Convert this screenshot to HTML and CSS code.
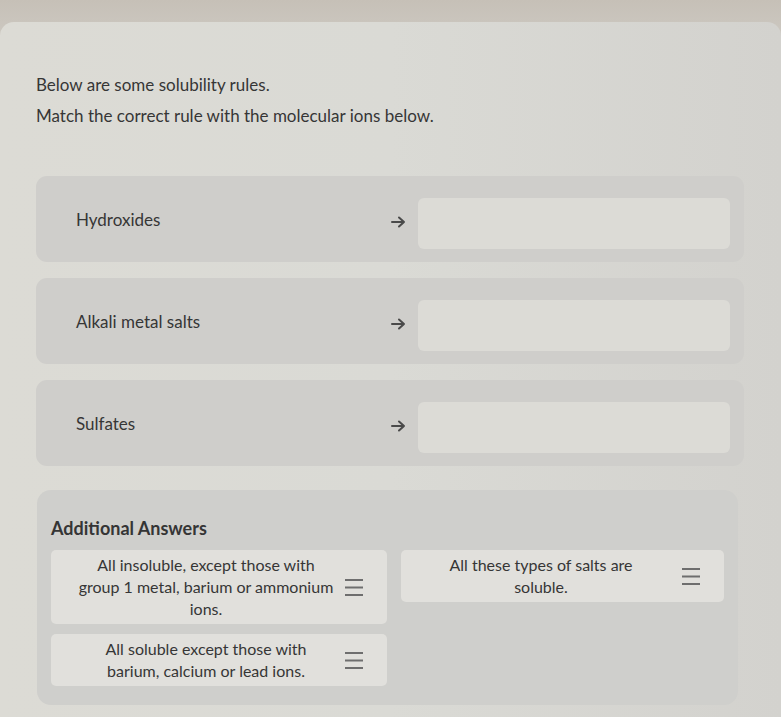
FILE: index.html
```html
<!DOCTYPE html>
<html lang="en">
<head>
    <meta charset="UTF-8">
    <meta name="viewport" content="width=device-width, initial-scale=1.0">
    <title>Solubility rules</title>
    <link rel="stylesheet" href="styles.css">
</head>
<body>
    <div class="sheet">
        <div class="question">
            <p>Below are some solubility rules.</p>
            <p>Match the correct rule with the molecular ions below.</p>
        </div>

        <div class="rows">
            <div class="match-row">
                <div class="term">Hydroxides</div>
                <svg class="arrow" width="15" height="12" viewBox="0 0 15 12"><path d="M1 6h12M8 1.5L13 6 8 10.5" fill="none" stroke="#4a4a4a" stroke-width="2" stroke-linecap="round" stroke-linejoin="round"/></svg>
                <div class="drop"></div>
            </div>
            <div class="match-row">
                <div class="term">Alkali metal salts</div>
                <svg class="arrow" width="15" height="12" viewBox="0 0 15 12"><path d="M1 6h12M8 1.5L13 6 8 10.5" fill="none" stroke="#4a4a4a" stroke-width="2" stroke-linecap="round" stroke-linejoin="round"/></svg>
                <div class="drop"></div>
            </div>
            <div class="match-row">
                <div class="term">Sulfates</div>
                <svg class="arrow" width="15" height="12" viewBox="0 0 15 12"><path d="M1 6h12M8 1.5L13 6 8 10.5" fill="none" stroke="#4a4a4a" stroke-width="2" stroke-linecap="round" stroke-linejoin="round"/></svg>
                <div class="drop"></div>
            </div>
        </div>

        <div class="answers">
            <h3>Additional Answers</h3>
            <div class="answer-grid">
                <div class="answer">
                    <span>All insoluble, except those with<br>group 1 metal, barium or ammonium<br>ions.</span>
                    <svg class="grip" width="20" height="18" viewBox="0 0 20 18"><path d="M1 2h18M1 9.5h18M1 17h18" stroke="#6e6e6e" stroke-width="2.2"/></svg>
                </div>
                <div class="answer answer-wide">
                    <span>All these types of salts are<br>soluble.</span>
                    <svg class="grip" width="20" height="18" viewBox="0 0 20 18"><path d="M1 2h18M1 9.5h18M1 17h18" stroke="#6e6e6e" stroke-width="2.2"/></svg>
                </div>
                <div class="answer">
                    <span>All soluble except those with<br>barium, calcium or lead ions.</span>
                    <svg class="grip" width="20" height="18" viewBox="0 0 20 18"><path d="M1 2h18M1 9.5h18M1 17h18" stroke="#6e6e6e" stroke-width="2.2"/></svg>
                </div>
            </div>
        </div>
    </div>
</body>
</html>
```

FILE: styles.css
```css
html, body {
    margin: 0;
    padding: 0;
    height: 100%;
    font-family: 'Lato', 'Liberation Sans', sans-serif;
    color: #363636;
    background: linear-gradient(180deg, #c6c0b7 0, #cdc9c2 40px);
    overflow: hidden;
}

.sheet {
    margin-top: 22px;
    min-height: 700px;
    padding: 52px 37px 0 36px;
    border-radius: 14px 14px 0 0;
    background: linear-gradient(90deg, #dcdbd5 0%, #dadad5 50%, #d3d2ce 100%);
}

.question p {
    margin: 0 0 9px;
    font-size: 17px;
    line-height: 22px;
}

.rows {
    display: flex;
    flex-direction: column;
    gap: 16px;
    margin-top: 49px;
}

.match-row {
    display: flex;
    align-items: center;
    height: 86px;
    padding: 0 14px 0 40px;
    border-radius: 11px;
    background-color: #cfcecb;
}

.term {
    flex: 1;
    font-size: 17px;
}

.arrow {
    margin: 6px 12px 0 0;
}

.drop {
    width: 312px;
    height: 51px;
    margin-top: 8px;
    border-radius: 6px;
    background-color: #dcdbd6;
}

.answers {
    margin: 24px 6px 0 1px;
    padding: 27px 13px 19px 14px;
    border-radius: 14px;
    background-color: #cfcfcc;
}

.answers h3 {
    margin: 0 0 11px;
    font-size: 18px;
    line-height: 22px;
    font-weight: 700;
    color: #353535;
}

.answer-grid {
    display: grid;
    grid-template-columns: 336px 323px;
    gap: 10px 14px;
    align-items: start;
}

.answer {
    display: flex;
    align-items: center;
    padding: 4px 23px 4px 19px;
    border-radius: 5px;
    background-color: #e1e0dc;
    font-size: 16px;
    line-height: 22px;
}

.answer-wide {
    padding-left: 2px;
}

.answer span {
    flex: 1;
    text-align: center;
}

.grip {
    flex: none;
    margin-left: 2px;
}
```
